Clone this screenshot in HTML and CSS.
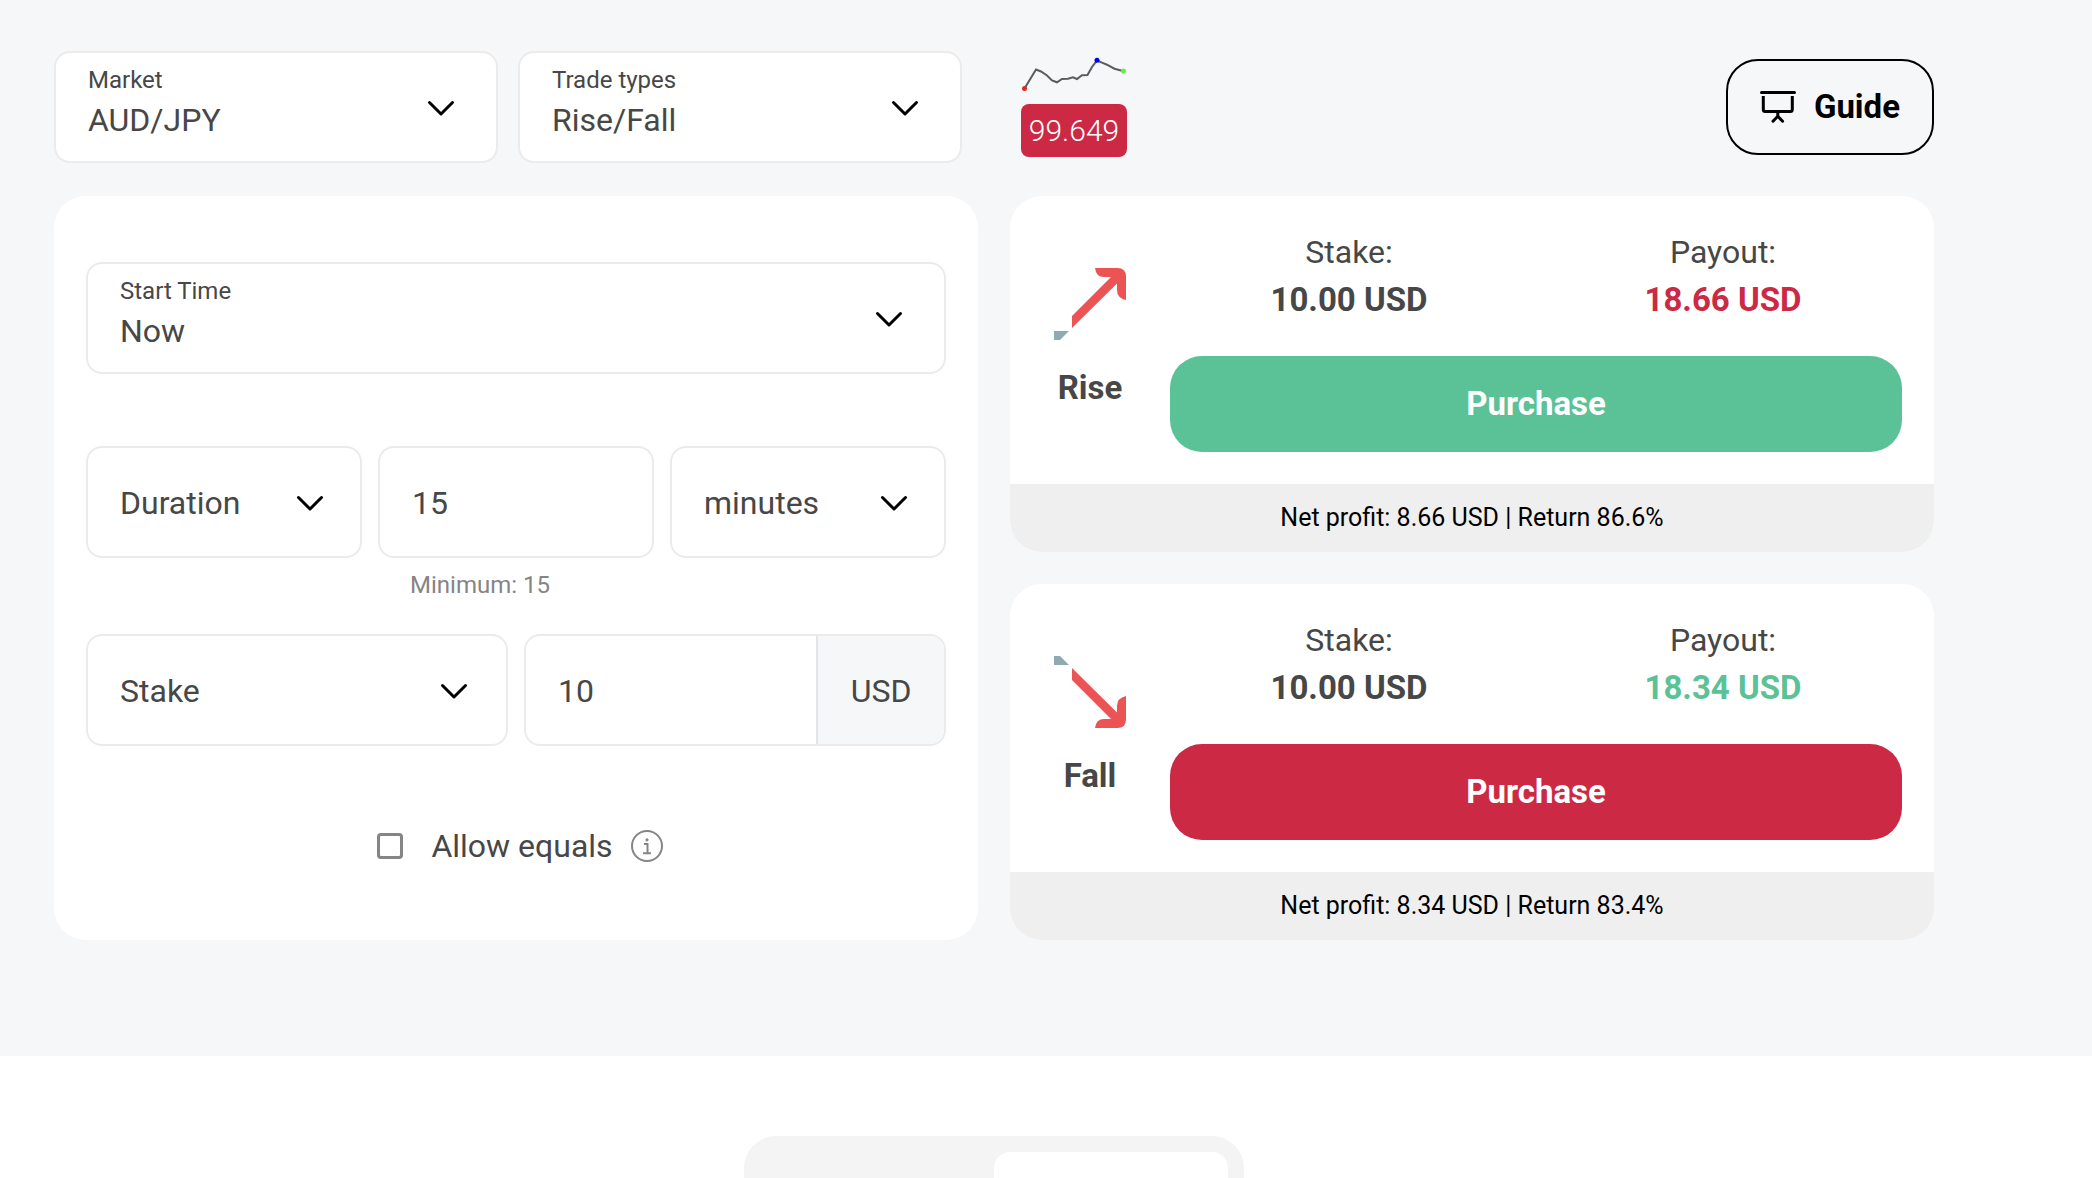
FILE: index.html
```html
<!DOCTYPE html>
<html lang="en">
<head>
<meta charset="utf-8">
<meta name="viewport" content="width=device-width, initial-scale=1">
<title>AUD/JPY Rise/Fall</title>
<link rel="stylesheet" href="styles.css">
</head>
<body>
<svg class="sprite" aria-hidden="true">
  <symbol id="chevron" viewBox="0 0 32 32"><path d="M4.500 10.500 16 22 27.500 10.500" fill="none" stroke="#000" stroke-width="3" stroke-linecap="round" stroke-linejoin="round"/></symbol>
</svg>
<main class="trade">
  <div class="container">
    <div class="topbar">
      <div class="markets">
        <div class="field labelled">
          <label for="market">Market</label>
          <select id="market"><option>AUD/JPY</option></select>
          <svg class="chevron" aria-hidden="true"><use href="#chevron"/></svg>
        </div>
        <div class="field labelled">
          <label for="trade-type">Trade types</label>
          <select id="trade-type"><option>Rise/Fall</option></select>
          <svg class="chevron" aria-hidden="true"><use href="#chevron"/></svg>
        </div>
      </div>
      <div class="quote-row">
        <div class="quote">
          <svg class="spark" viewBox="0 0 106 40" aria-hidden="true">
            <path d="M3.500 34.500 15 15.500 20 17.500 26 21.500 31 26.500 36 28.300 41 25 47 24.700 52 23.300 56 25 61 21.300 66.500 21 71 13 76 6.500 81 8.700 86 10.700 93.500 14.700 102 17" fill="none" stroke="#5c5c5c" stroke-width="2"/>
            <circle cx="3.500" cy="34.500" r="2.500" fill="#e02b20"/>
            <circle cx="76" cy="6.300" r="2.500" fill="#0000f0"/>
            <circle cx="102.500" cy="17" r="2.500" fill="#5df542"/>
          </svg>
          <output class="price">99.649</output>
        </div>
        <button class="guide" type="button">
          <svg class="guide-icon" viewBox="0 0 36 32" fill="none" stroke="#000" stroke-width="3" stroke-linecap="round" stroke-linejoin="round" aria-hidden="true">
            <path d="M1.500 1.500H34.500M17.800 21V25M13 30.200 17.800 25.300 22.600 30.200"/>
            <path d="M3.300 5V18.500Q3.300 20.500 5.300 20.500H30.300Q32.300 20.500 32.300 18.500V5" stroke-linecap="butt"/>
          </svg>
          Guide
        </button>
      </div>
    </div>

    <div class="panels">
      <form class="panel ticket">
        <div class="field labelled">
          <label for="start">Start Time</label>
          <select id="start"><option>Now</option></select>
          <svg class="chevron" aria-hidden="true"><use href="#chevron"/></svg>
        </div>
        <div class="duration">
          <div class="field">
            <select aria-label="Duration"><option>Duration</option></select>
            <svg class="chevron" aria-hidden="true"><use href="#chevron"/></svg>
          </div>
          <div class="field">
            <input type="text" inputmode="numeric" value="15" aria-label="Duration" aria-describedby="min">
          </div>
          <div class="field">
            <select aria-label="minutes"><option>minutes</option></select>
            <svg class="chevron" aria-hidden="true"><use href="#chevron"/></svg>
          </div>
          <p class="hint" id="min">Minimum: 15</p>
        </div>
        <div class="stake">
          <div class="field">
            <select aria-label="Stake"><option>Stake</option></select>
            <svg class="chevron" aria-hidden="true"><use href="#chevron"/></svg>
          </div>
          <div class="amount">
            <input type="text" inputmode="decimal" value="10" aria-label="Stake">
            <span class="currency">USD</span>
          </div>
        </div>
        <div class="equals">
          <input type="checkbox" id="equals">
          <label for="equals">Allow equals</label>
          <svg class="info" viewBox="0 0 32 32" fill="none" stroke="#858585" stroke-width="2" aria-hidden="true">
            <circle cx="16" cy="16" r="15"/>
            <path d="M13 14H16.500V22.500M12 23.200H20"/>
            <circle cx="16" cy="9.800" r="1.600" fill="#858585" stroke="none"/>
          </svg>
        </div>
      </form>

      <div class="contracts">
        <section class="panel contract">
          <div class="contract-body">
            <div class="direction">
              <svg class="arrow" viewBox="0 0 72 72" aria-hidden="true">
                <path fill="#ec5355" d="M41 0H63.500Q72 0 72 8.500V32Q63 30 63 22V15.500L18 60V48L57 9H50Q42 9 41 0Z"/>
                <path fill="#8faab0" d="M0 63H15L6 72H0Z"/>
              </svg>
              <h2>Rise</h2>
            </div>
            <div class="offer">
              <dl>
                <div><dt>Stake:</dt><dd>10.00 USD</dd></div>
                <div><dt>Payout:</dt><dd class="down">18.66 USD</dd></div>
              </dl>
              <button class="buy buy-rise" type="button">Purchase</button>
            </div>
          </div>
          <p class="profit">Net profit: 8.66 USD | Return 86.6%</p>
        </section>
        <section class="panel contract">
          <div class="contract-body">
            <div class="direction">
              <svg class="arrow" viewBox="0 0 72 72" aria-hidden="true">
                <path fill="#ec5355" d="M41 72H63.500Q72 72 72 63.500V40Q63 42 63 50V56.500L18 12V24L57 63H50Q42 63 41 72Z"/>
                <path fill="#8faab0" d="M0 9H15L6 0H0Z"/>
              </svg>
              <h2>Fall</h2>
            </div>
            <div class="offer">
              <dl>
                <div><dt>Stake:</dt><dd>10.00 USD</dd></div>
                <div><dt>Payout:</dt><dd class="up">18.34 USD</dd></div>
              </dl>
              <button class="buy buy-fall" type="button">Purchase</button>
            </div>
          </div>
          <p class="profit">Net profit: 8.34 USD | Return 83.4%</p>
        </section>
      </div>
    </div>
  </div>
</main>
<div class="details">
  <div class="container">
    <div class="tabs"><span class="tab"></span><span class="tab active"></span></div>
  </div>
</div>
</body>
</html>
```

FILE: styles.css
```css
:root {
  --text: #474747;
  --muted: #858585;
  --line: #ebebeb;
  --surface: #f6f7f9;
  --red: #cc2944;
  --green: #5bc196;
  --strong-size: 33px;
}

* { box-sizing: border-box; }

body {
  margin: 0;
  height: 100vh;
  display: flex;
  flex-direction: column;
  overflow: hidden;
  background: #fff;
  color: var(--text);
  font: 32px/48px Roboto, "Liberation Sans", sans-serif;
}

h2, p, dl, dd { margin: 0; }
button, input, select { font: inherit; color: inherit; }
.sprite { display: none; }

.trade {
  flex: none;
  padding: 51px 54px 116px;
  background: var(--surface);
}

.container { max-width: 1880px; }

.topbar, .panels {
  display: grid;
  grid-template-columns: 1fr 1fr;
  column-gap: 32px;
}

.topbar { margin-bottom: 33px; align-items: center; }

.markets {
  display: grid;
  grid-template-columns: 1fr 1fr;
  gap: 20px;
  padding-right: 16px;
}

.quote-row {
  display: flex;
  justify-content: space-between;
  align-items: center;
  padding-left: 11px;
}

.quote {
  display: flex;
  flex-direction: column;
  gap: 10px;
  margin-bottom: 4px;
}

.spark { width: 106px; height: 40px; }

.price {
  border-radius: 8px;
  background: var(--red);
  color: #fff;
  font-size: 30px;
  font-weight: 300;
  line-height: 53px;
  text-align: center;
}

.guide {
  display: flex;
  align-items: center;
  gap: 18px;
  height: 96px;
  padding: 0 32px;
  border: 2px solid #000;
  border-radius: 32px;
  background: none;
  color: #000;
  font-size: var(--strong-size);
  font-weight: 700;
}

.guide-icon { width: 36px; height: 32px; }

/* Form fields: label, control and chevron share one grid cell */
.field { display: grid; }
.field > * { grid-area: 1 / 1; }

.field label {
  align-self: start;
  padding: 13px 34px 0;
  font-size: 24px;
  line-height: 32px;
  z-index: 1;
  pointer-events: none;
}

.field select, .field input, .amount {
  width: 100%;
  height: 112px;
  border: 2px solid var(--line);
  border-radius: 16px;
  background: #fff;
}

.field select, .field input {
  appearance: none;
  padding: 2px 32px 0;
}

.labelled select { padding-top: 26px; }

.chevron {
  width: 32px;
  height: 32px;
  place-self: center end;
  margin: 2px 38px 0 0;
  pointer-events: none;
}

.labelled .chevron { margin-right: 41px; }
.duration .chevron { margin-right: 36px; }

.panel { border-radius: 32px; background: #fff; overflow: hidden; }
.ticket { padding: 66px 32px 0; }

.duration {
  display: grid;
  grid-template-columns: repeat(3, 1fr);
  column-gap: 16px;
  margin-top: 72px;
}

.hint {
  grid-column: 2;
  padding: 9px 32px 0;
  color: var(--muted);
  font-size: 24px;
  line-height: 36px;
}

.stake {
  display: grid;
  grid-template-columns: 1fr 1fr;
  gap: 16px;
  margin-top: 31px;
}

.amount { display: flex; overflow: hidden; }

.amount input {
  flex: 1;
  min-width: 0;
  border: 0;
  padding: 2px 32px 0;
  background: none;
}

.currency {
  width: 128px;
  border-left: 2px solid #e3e5e8;
  background: var(--surface);
  line-height: 110px;
  text-align: center;
}

.equals {
  display: flex;
  justify-content: center;
  align-items: center;
  margin-top: 76px;
  padding-left: 8px;
}

.equals input {
  appearance: none;
  width: 26px;
  height: 26px;
  margin: 0 28px 0 0;
  border: 3px solid var(--muted);
  border-radius: 4px;
}

.info { width: 32px; height: 32px; margin-left: 18px; }

.contracts { display: flex; flex-direction: column; gap: 32px; }

.contract-body { display: flex; gap: 32px; padding: 32px; }

.direction {
  width: 96px;
  display: flex;
  flex-direction: column;
  align-items: center;
  justify-content: center;
  gap: 24px;
}

.direction h2 { font-size: var(--strong-size); }
.arrow { width: 72px; height: 72px; }

.offer { flex: 1; }

.offer dl {
  display: grid;
  grid-template-columns: 1fr 1fr;
  gap: 16px;
  margin-bottom: 32px;
  text-align: center;
}

.offer dd { font-size: var(--strong-size); font-weight: 700; }
.offer .down { color: var(--red); }
.offer .up { color: var(--green); }

.buy {
  display: block;
  width: 100%;
  height: 96px;
  border: 0;
  border-radius: 32px;
  color: #fff;
  font-size: var(--strong-size);
  font-weight: 700;
}

.buy-rise { background: var(--green); }
.buy-fall { background: var(--red); }

.profit {
  padding: 16px;
  background: #efefef;
  color: #000;
  font-size: 25px;
  line-height: 36px;
  text-align: center;
}

.details { flex: 1; min-height: 0; padding: 80px 54px 0; overflow: hidden; }

.tabs {
  display: grid;
  grid-template-columns: 1fr 1fr;
  width: 500px;
  margin: 0 auto;
  padding: 16px;
  border-radius: 32px;
  background: #f4f4f4;
}

.tab { height: 80px; border-radius: 16px; }
.tab.active { background: #fff; }
```
